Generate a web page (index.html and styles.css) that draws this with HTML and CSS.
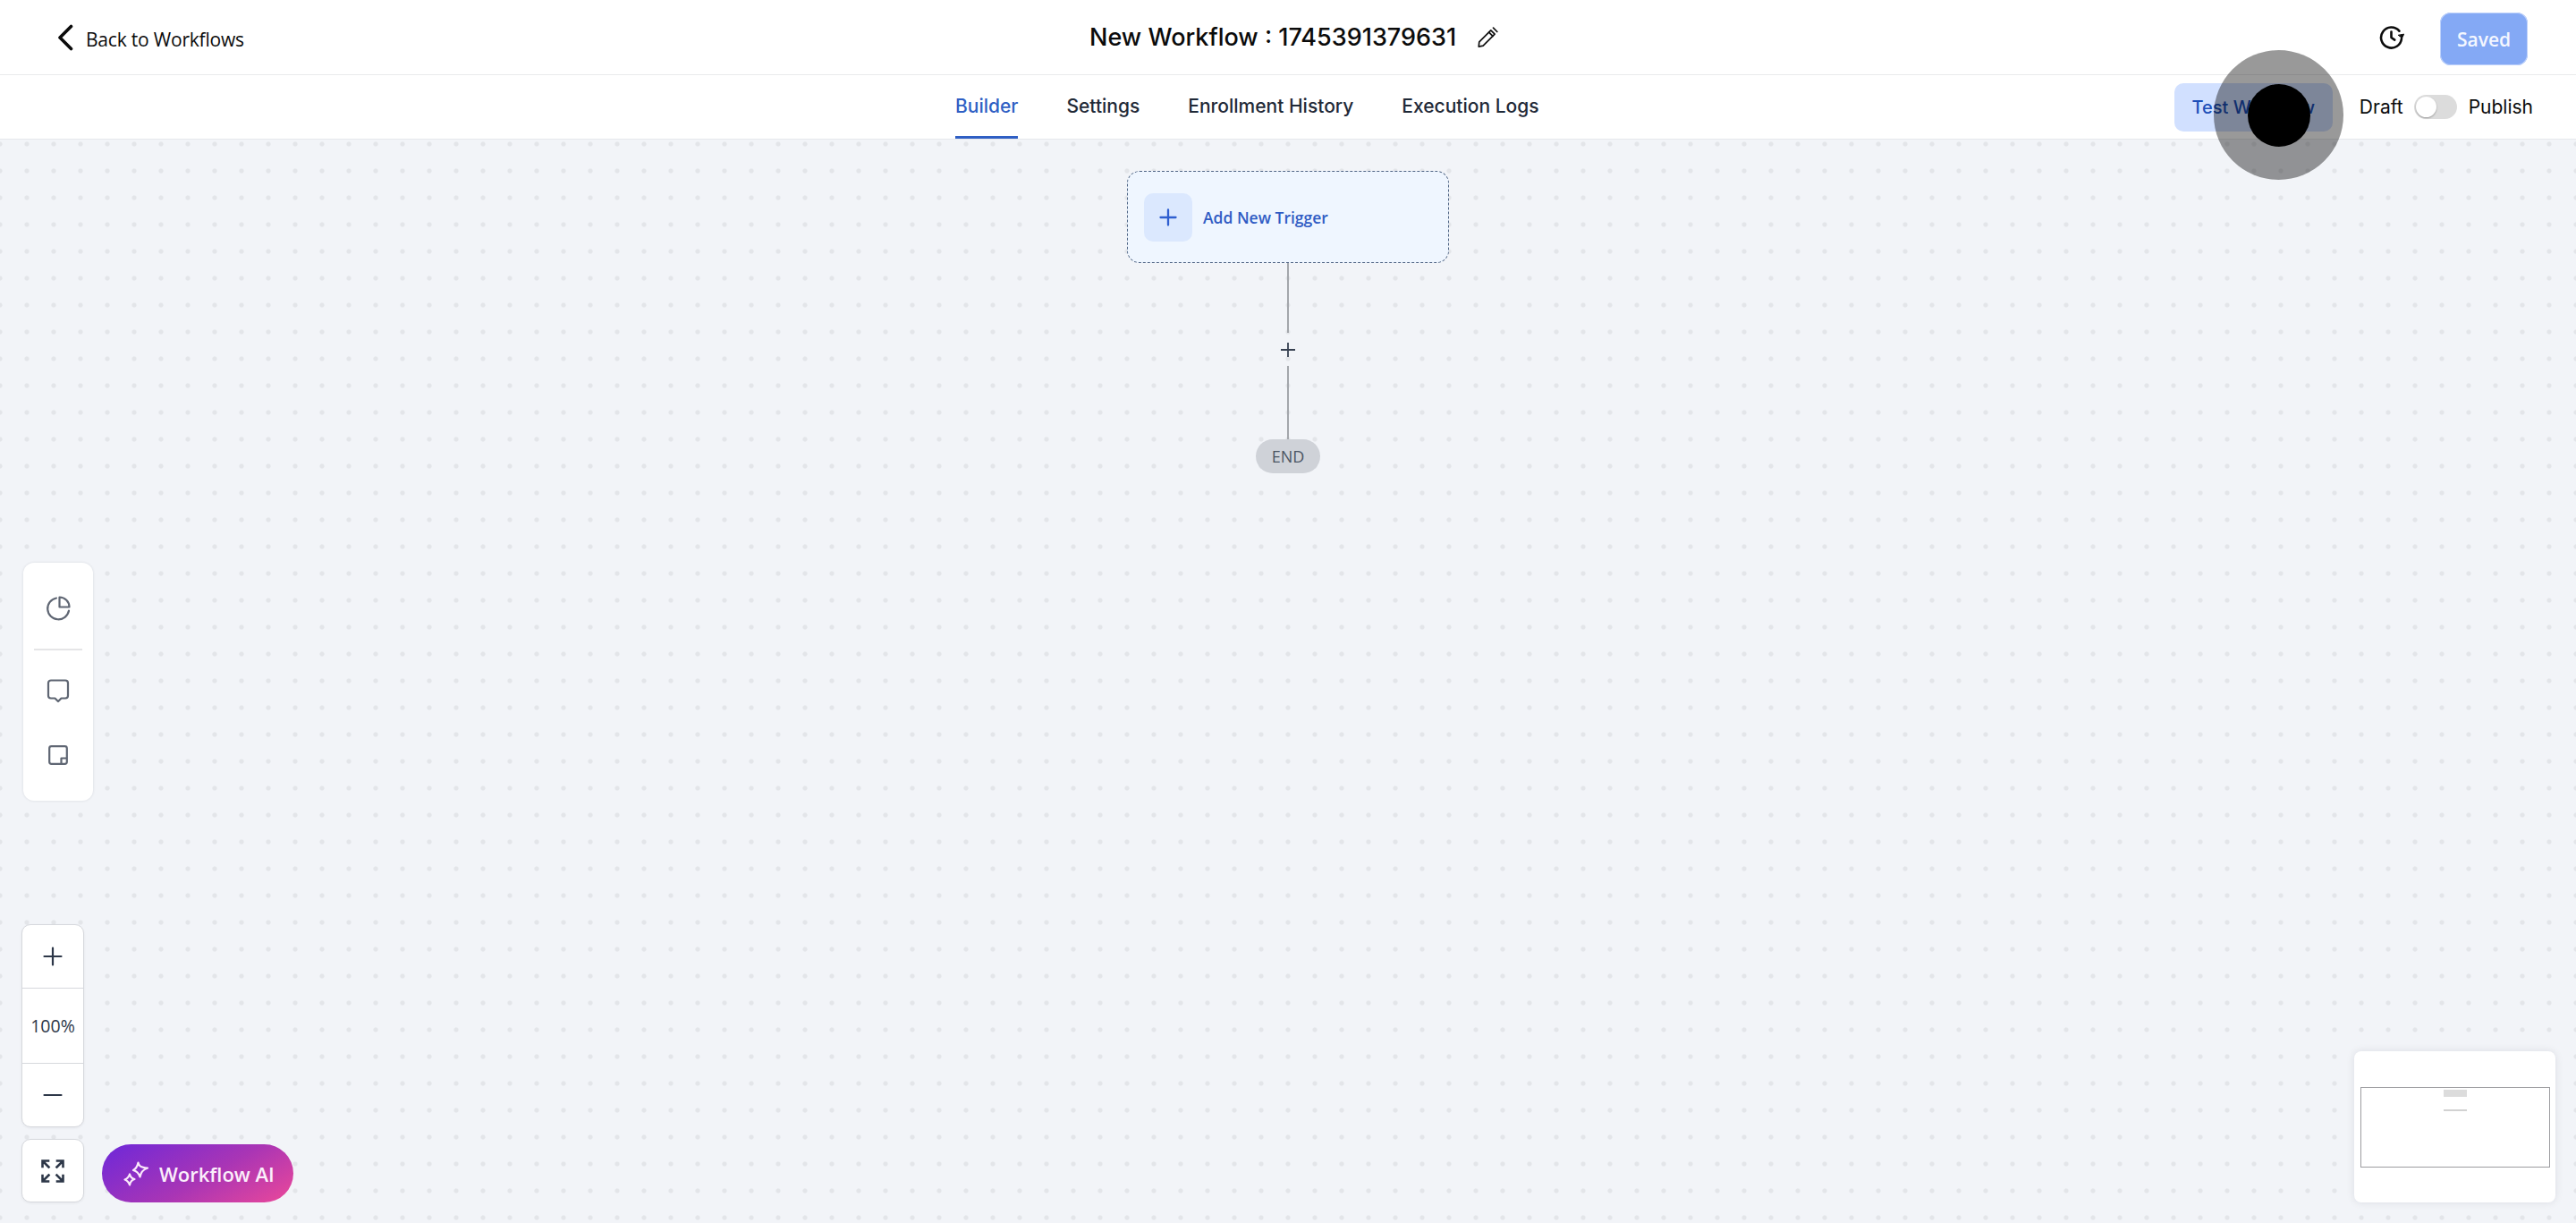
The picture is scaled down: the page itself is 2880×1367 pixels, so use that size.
FILE: index.html
```html
<!DOCTYPE html>
<html lang="en">
<head>
<meta charset="utf-8">
<title>New Workflow</title>
<link rel="stylesheet" href="styles.css">
</head>
<body>
<div class="app">
  <header class="topbar">
    <a class="back">
      <svg class="back-icon" viewBox="0 0 18 30" fill="none"><path d="M15.500 2.500 3 15l12.500 12.500" stroke="#0b0b0b" stroke-width="3.600" stroke-linecap="round" stroke-linejoin="round"/></svg>
      <span>Back to Workflows</span>
    </a>
    <div class="title-group">
      <h1 class="title">New Workflow : 1745391379631</h1>
      <svg class="pencil" viewBox="0 0 24 24" fill="none" stroke="#111" stroke-width="1.600" stroke-linejoin="round" stroke-linecap="round"><path d="M3.500 16.500 15.500 4.500l4 4-12 12-4.500.8z"/><path d="M13.500 6.500l4 4"/><path d="M18 2l4 4"/></svg>
    </div>
    <div class="top-actions">
      <svg class="history" viewBox="0 0 28 28" fill="none" stroke="#0b0b0b" stroke-width="2.600" stroke-linecap="round" stroke-linejoin="round"><path d="M25 15a11.500 11.500 0 1 1-2.600-8.300"/><path d="M13.500 7.500V14l3.800 2.600"/><path d="M21.500 11.500 25.500 14.500 27.500 10.500z" fill="#0b0b0b" stroke-width="1"/></svg>
      <button class="saved">Saved</button>
    </div>
  </header>
  <nav class="tabbar">
    <div class="tabs">
      <a class="tab tab-active">Builder</a>
      <a class="tab">Settings</a>
      <a class="tab">Enrollment History</a>
      <a class="tab">Execution Logs</a>
    </div>
    <div class="tab-actions">
      <button class="test">Test Workflow</button>
      <span class="state state-draft">Draft</span>
      <span class="toggle"><span class="knob"></span></span>
      <span class="state">Publish</span>
    </div>
  </nav>
  <main class="canvas">
    <div class="flow">
      <div class="trigger">
        <span class="trigger-icon"><svg viewBox="0 0 20 20" fill="none" stroke="#2f5fd0" stroke-width="2.300" stroke-linecap="round"><path d="M10 1.500v17M1.500 10h17"/></svg></span>
        <span class="trigger-label">Add New Trigger</span>
      </div>
      <div class="edge edge-top"></div>
      <svg class="edge-plus" viewBox="0 0 18 18" fill="none" stroke="#374151" stroke-width="1.800"><path d="M9 1v16M1 9h16"/></svg>
      <div class="edge edge-bottom"></div>
      <div class="end">END</div>
    </div>

    <aside class="tools">
      <svg class="tool" viewBox="0 0 28 28" fill="none" stroke="#5f6673" stroke-width="2.200" stroke-linecap="round" stroke-linejoin="round"><path d="M12 2.500a12 12 0 1 0 14 14"/><path d="M15.500 1.500a11 11 0 0 1 11 11h-11z"/></svg>
      <span class="tools-rule"></span>
      <svg class="tool tool-chat" viewBox="0 0 26 26" fill="none" stroke="#5f6673" stroke-width="2.200" stroke-linejoin="round"><path d="M5 1.500h16a3 3 0 0 1 3 3v14a3 3 0 0 1-3 3h-4.500L13 25l-3.500-3.500H5a3 3 0 0 1-3-3v-14a3 3 0 0 1 3-3z"/></svg>
      <svg class="tool tool-note" viewBox="0 0 22 22" fill="none" stroke="#5f6673" stroke-width="2.200" stroke-linejoin="round"><path d="M3.500 1.200h15a2.300 2.300 0 0 1 2.300 2.300v15a2.300 2.300 0 0 1-2.300 2.300h-15a2.300 2.300 0 0 1-2.300-2.300v-15a2.300 2.300 0 0 1 2.300-2.300z"/><path d="M14.500 20.500v-6h6"/></svg>
    </aside>

    <div class="bottom-left">
      <div class="zoom">
        <div class="zoom-cell zoom-in"><svg viewBox="0 0 22 22" fill="none" stroke="#2d3748" stroke-width="2.200" stroke-linecap="round"><path d="M11 1.500v19M1.500 11h19"/></svg></div>
        <div class="zoom-cell zoom-level">100%</div>
        <div class="zoom-cell zoom-out"><svg viewBox="0 0 22 4" fill="none" stroke="#2d3748" stroke-width="2.200" stroke-linecap="round"><path d="M1.500 2h19"/></svg></div>
      </div>
      <div class="bottom-row">
        <button class="fit"><svg viewBox="0 0 26 26" fill="none" stroke="#2d3748" stroke-width="2.600" stroke-linecap="square"><path d="M1.500 8V1.500H8M2 2l6.500 6.500M24.500 8V1.500H18M24 2l-6.500 6.500M1.500 18v6.500H8M2 24l6.500-6.500M24.500 18v6.500H18M24 24l-6.500-6.500"/></svg></button>
        <button class="ai">
          <svg viewBox="0 0 28 28" fill="none" stroke="#fbe9fb" stroke-width="2.200" stroke-linejoin="round"><path d="M16.500 1.500c.5 3.500 2.500 5.500 10.500 6-5.500 2-7.500 4.500-8.500 10-1.500-4.500-3.500-6.500-7.500-7.500 3-1.500 4.500-4 5.500-8.500z"/><path d="M7 14.500c.5 2.500 2 4.500 5.500 5.500-3 .8-4.800 2.500-5.500 6.500-1-3-2.500-5-5.500-6 2.800-1 4.500-3 5.500-6z"/></svg>
          <span>Workflow AI</span>
        </button>
      </div>
    </div>

    <div class="minimap">
      <div class="viewport">
        <span class="mini-node"></span>
        <span class="mini-end"></span>
      </div>
    </div>
  </main>
  <div class="click-ring"><span class="click-dot"></span></div>
</div>
</body>
</html>
```

FILE: styles.css
```css
* { box-sizing: border-box; }
html, body { margin: 0; height: 100%; overflow: hidden; }
body { font-family: "Inter", "Liberation Sans", sans-serif; color: #0b0b0b; background: #fff; }
button { font: inherit; border: 0; padding: 0; }

.app { position: relative; height: 1367px; display: flex; flex-direction: column; }

.topbar {
  height: 84px; flex: none; display: grid; grid-template-columns: 1154px auto 1fr;
  align-items: center; padding-left: 64px; padding-right: 54px;
  background: #fff; border-bottom: 1px solid #e9eaec;
}
.back { display: flex; align-items: center; gap: 14px; font-family: "Open Sans", sans-serif; font-size: 21px; font-weight: 500; letter-spacing: -0.2px; color: #0b0b0b; }
.back-icon { width: 18px; height: 30px; }
.back span { position: relative; top: 2px; }
.title-group { display: flex; align-items: center; gap: 22px; }
.title { margin: 0; font-size: 27px; font-weight: 500; line-height: 40px; color: #0b0b0b; }
.pencil { width: 26px; height: 26px; }
.top-actions { display: flex; align-items: center; justify-content: flex-end; gap: 40px; }
.history { width: 28px; height: 28px; }
.saved {
  width: 98px; height: 59px; margin-top: 3px; padding-top: 2px; border-radius: 12px; background: #84a9f5;
  box-shadow: 0 0 0 1px #bfd2fa inset; color: #f4f7ff;
  font-family: "Open Sans", sans-serif; font-size: 21px; font-weight: 600;
}

.tabbar {
  height: 72px; flex: none; display: flex; align-items: stretch; justify-content: space-between;
  padding-left: 1068px; padding-right: 48px; background: #fff; border-bottom: 1px solid #e6e8ec;
}
.tabs { display: flex; gap: 54px; }
.tab { display: flex; align-items: center; height: 71px; padding-top: 1px; font-size: 21px; font-weight: 500; color: #1f2937; border-bottom: 3px solid transparent; }
.tab-active { color: #2f5fc4; border-bottom-color: #2f5fc4; }
.tab-actions { display: flex; align-items: center; }
.test {
  width: 177px; height: 54px; margin-right: 30px; border-radius: 10px; background: #d1e0ff;
  color: #1d4fb8; font-size: 20px; font-weight: 500;
}
.state { font-size: 21px; font-weight: 400; color: #0b0b0b; }
.state-draft { margin-right: 12px; }
.toggle { position: relative; width: 48px; height: 27px; margin-right: 13px; border-radius: 14px; background: #dcdcdc; }
.knob { position: absolute; left: 2px; top: 2px; width: 23px; height: 23px; border-radius: 50%; background: #fff; box-shadow: 0 1px 2px rgba(0,0,0,.3); }

.canvas {
  position: relative; flex: 1; overflow: hidden;
  background-color: #f2f4f8;
  background-image: radial-gradient(circle at center, #e3e5e9 0, #e3e5e9 2px, transparent 3.200px);
  background-size: 30px 30px;
  background-position: -15px -10px;
}

.flow { display: flex; flex-direction: column; align-items: center; padding-top: 35px; }
.trigger {
  width: 360px; height: 103px; display: flex; align-items: center; gap: 12px; padding-left: 18px;
  border: 1px dashed #4f6484; border-radius: 14px; background: #eff6ff;
}
.trigger-icon { width: 54px; height: 54px; display: flex; align-items: center; justify-content: center; border-radius: 10px; background: #dbe8fe; }
.trigger-icon svg { width: 20px; height: 20px; }
.trigger-label { font-family: "Open Sans", sans-serif; font-size: 17.500px; font-weight: 600; color: #2f5cc4; }
.edge { width: 2px; background: #a3a6ab; }
.edge-top { height: 78px; }
.edge-plus { width: 18px; height: 18px; margin: 10px 0 9px; }
.edge-bottom { height: 82px; }
.end {
  width: 72px; height: 38px; display: flex; align-items: center; justify-content: center;
  border-radius: 19px; background: #cfd2d8; font-family: "Open Sans", sans-serif; font-size: 18px; color: #4b5563;
}

.tools {
  position: absolute; left: 26px; top: 473px; width: 78px; height: 266px;
  display: flex; flex-direction: column; align-items: center;
  border-radius: 12px; background: #fff; box-shadow: 0 0 3px rgba(16,24,40,.12);
}
.tool { width: 28px; height: 28px; margin-top: 37px; }
.tools-rule { width: 54px; height: 2px; margin-top: 31px; background: #e5e5e7; }
.tool-chat { width: 26px; height: 26px; margin-top: 32px; }
.tool-note { width: 22px; height: 22px; margin-top: 48px; }

.bottom-left { position: absolute; left: 24px; top: 877px; display: flex; flex-direction: column; gap: 13px; }
.zoom { width: 70px; border: 1px solid #d6d8dd; border-radius: 10px; background: #fff; box-shadow: 0 1px 3px rgba(16,24,40,.06); }
.zoom-cell { display: flex; align-items: center; justify-content: center; }
.zoom-in { height: 71px; border-bottom: 1px solid #d6d8dd; }
.zoom-in svg { width: 22px; height: 22px; }
.zoom-level { height: 84px; border-bottom: 1px solid #d6d8dd; font-family: "Open Sans", sans-serif; font-size: 19.500px; color: #2d3748; }
.zoom-out { height: 70px; }
.zoom-out svg { width: 22px; height: 4px; }
.bottom-row { display: flex; align-items: flex-end; gap: 20px; }
.fit {
  width: 70px; height: 71px; display: flex; align-items: center; justify-content: center;
  border: 1px solid #d6d8dd; border-radius: 10px; background: #fff; box-shadow: 0 1px 3px rgba(16,24,40,.06);
}
.fit svg { width: 26px; height: 26px; }
.ai {
  width: 214px; height: 65px; display: flex; align-items: center; gap: 12px; padding-left: 24px;
  border-radius: 33px; background: linear-gradient(150deg, #6d28d9 0%, #a935b5 55%, #ec4899 100%);
  color: #fbeefb; font-family: "Open Sans", sans-serif; font-size: 22px; font-weight: 600;
}
.ai svg { width: 28px; height: 28px; }

.minimap {
  position: absolute; right: 23px; bottom: 23px; width: 225px; height: 169px; padding-top: 40px; padding-left: 7px;
  border-radius: 8px; background: #fff; box-shadow: 0 0 10px rgba(16,24,40,.1);
}
.viewport { position: relative; width: 212px; height: 90px; border: 1px solid #9c9ca0; }
.mini-node { position: absolute; left: 92px; top: 2px; width: 26px; height: 8px; background: #dcdcdc; }
.mini-end { position: absolute; left: 92px; top: 24px; width: 26px; height: 2px; background: #d2d2d2; }

.click-ring {
  position: absolute; left: 2475px; top: 56px; width: 145px; height: 145px;
  display: flex; align-items: center; justify-content: center;
  border-radius: 50%; background: rgba(0,0,0,.4);
}
.click-dot { width: 70px; height: 70px; border-radius: 50%; background: #000; }
```
